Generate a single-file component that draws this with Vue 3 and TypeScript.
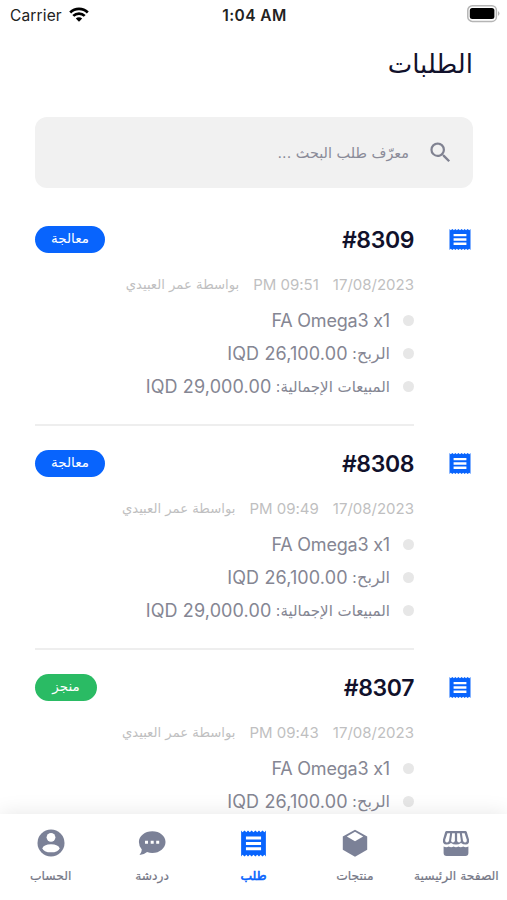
<script setup lang="ts">
interface Order {
  id: string
  status: string
  done: boolean
  time: string
}

const orders: Order[] = [
  { id: '#8309', status: 'معالجة', done: false, time: '09:51' },
  { id: '#8308', status: 'معالجة', done: false, time: '09:49' },
  { id: '#8307', status: 'منجز', done: true, time: '09:43' },
]

const receipt =
  'M17.500 17.200h-11v-2.300h11zm0-4.100h-11v-2.300h11zm0-4.200h-11V6.600h11zM3 22l1-1.200L5.500 22l1.300-1.200L8 22l1.300-1.200 1.300 1.200 1.400-1.200 1.400 1.200 1.300-1.200L16 22l1.200-1.200 1.300 1.200 1.500-1.200 1 1.200V2l-1 1.200L18.500 2l-1.300 1.200L16 2l-1.300 1.200L13.400 2 12 3.200 10.600 2 9.300 3.200 8 2 6.800 3.200 5.500 2 4 3.200 3 2z'

const tabs = [
  { key: 'home', label: 'الصفحة الرئيسية' },
  { key: 'products', label: 'منتجات' },
  { key: 'orders', label: 'طلب' },
  { key: 'chat', label: 'دردشة' },
  { key: 'account', label: 'الحساب' },
]
</script>

<template>
  <div class="screen" dir="rtl">
    <header class="status" dir="ltr">
      <div class="carrier">
        <span>Carrier</span>
        <svg width="20" height="15" viewBox="0 0 20 15">
          <g fill="none" stroke="#000" stroke-width="2.700">
            <path d="M1.200 5.500a12.500 12.500 0 0 1 17.600 0" />
            <path d="M4.300 8.900a8.100 8.100 0 0 1 11.400 0" />
          </g>
          <path d="M10 14.800l-3.200-3.200a4.600 4.600 0 0 1 6.400 0z" />
        </svg>
      </div>
      <span class="clock">1:04 AM</span>
      <svg class="battery" width="33" height="18" viewBox="0 0 33 18">
        <rect x=".8" y=".8" width="28.600" height="15.600" rx="4.500" fill="#fff" stroke="#b5b5b5" stroke-width="1.500" />
        <rect x="2.800" y="3" width="24.600" height="11" rx="2.500" />
        <path d="M31 6q3 2.500 0 5z" fill="#b5b5b5" />
      </svg>
    </header>

    <h1>الطلبات</h1>

    <div class="search">
      <svg width="27" height="27" viewBox="0 0 24 24" fill="#808291">
        <path d="M15.500 14h-.79l-.28-.27A6.470 6.470 0 0 0 16 9.500 6.500 6.500 0 1 0 9.500 16c1.610 0 3.090-.59 4.230-1.570l.27.28v.79l5 4.990L20.490 19l-4.990-5zm-6 0C7.010 14 5 11.990 5 9.500S7.010 5 9.500 5 14 7.010 14 9.500 11.990 14 9.500 14z" />
      </svg>
      <span>معرّف طلب البحث ...</span>
    </div>

    <main>
      <article v-for="o in orders" :key="o.id" class="order">
        <svg class="mark" width="28" height="25" viewBox="0 0 24 24" preserveAspectRatio="none"><path :d="receipt" /></svg>
        <div class="body">
          <div class="top">
            <b dir="ltr">{{ o.id }}</b>
            <span class="badge" :class="{ done: o.done }">{{ o.status }}</span>
          </div>
          <div class="meta">
            <span>17/08/2023</span>
            <span>{{ o.time }} PM</span>
            <span class="by">بواسطة عمر العبيدي</span>
          </div>
          <ul>
            <li><span class="product" dir="ltr">FA Omega3 x1</span></li>
            <li><span class="ar profit">الربح:</span><span class="amount">26,100.00 IQD</span></li>
            <li><span class="ar">المبيعات الإجمالية:</span><span class="amount">29,000.00 IQD</span></li>
          </ul>
        </div>
      </article>
    </main>

    <nav>
      <div v-for="t in tabs" :key="t.key" class="tab" :class="{ active: t.key === 'orders' }">
        <svg v-if="t.key === 'home'" width="28" height="28" viewBox="0 0 28 28">
          <path d="M4.600 2h18.800q1 0 1.400 1L27 10.500q.6 5-3.200 5-2.800 0-4.800-1.600-2.200 1.600-5 1.600t-5-1.600q-2 1.600-4.800 1.600Q.4 15.500 1 10.500L3.200 3q.4-1 1.400-1z" />
          <g fill="#fff">
            <path d="M5.400 4.200h2.700l-1 7q-.5 2.300-2.100 2.300-2.200 0-1.700-2.900z" />
            <path d="M10.200 4.200h2.700v7.300q-.2 2.100-1.900 2.100-2.100 0-1.800-2.400z" />
            <path d="M15.100 4.200h2.700l1 7q.3 2.400-1.800 2.400-1.700 0-1.900-2.100z" />
            <path d="M19.900 4.200h2.700l2.100 6.400q.5 2.900-1.700 2.900-1.600 0-2.100-2.300z" />
          </g>
          <path d="M1.600 17.600q2.800 1.200 5.200 0 2.300 1.200 4.800 0 2.400 1.200 4.800 0 2.400 1.200 4.800 0 2.400 1.200 5.200 0v6.400q0 3-3 3H4.600q-3 0-3-3z" />
        </svg>
        <svg v-else-if="t.key === 'products'" width="28" height="28" viewBox="0 0 28 28">
          <path d="M14 .8l12.200 6.800v13.200L14 27.800 1.800 20.800V7.600z" />
          <path d="M14 2.800l8.200 4.700L14 12.300 5.800 7.500z" fill="#fff" />
        </svg>
        <svg v-else-if="t.key === 'orders'" width="33" height="31" viewBox="0 0 24 24" preserveAspectRatio="none"><path :d="receipt" /></svg>
        <svg v-else-if="t.key === 'chat'" width="28" height="28" viewBox="0 0 28 28">
          <path d="M14.300 2.200C21.800 2.200 27.500 7 27.500 13S21.800 24 14.300 24q-2.700 0-5.200-.9Q6 25.900 1.500 26q2.300-2.400 2.300-5.500Q.9 17.300.9 13C.9 7 6.800 2.200 14.300 2.200z" />
          <path fill="#fff" d="M7 11.700h3v3H7zM12.700 11.700h3v3h-3zM18.200 11.700h3v3h-3z" />
        </svg>
        <svg v-else width="28" height="28" viewBox="0 0 28 28">
          <circle cx="14" cy="14" r="13.500" />
          <circle cx="14" cy="8.300" r="4.400" fill="#fff" />
          <ellipse cx="14" cy="19.300" rx="8.500" ry="4" fill="#fff" />
        </svg>
        <span>{{ t.label }}</span>
      </div>
    </nav>
  </div>
</template>

<style>
body {
  margin: 0;
  background: #fff;
  overflow: hidden;
}
</style>

<style scoped>
.screen {
  width: 507px;
  height: 900px;
  display: flex;
  flex-direction: column;
  overflow: hidden;
  background: #fff;
  font-family: Inter, 'DejaVu Sans', sans-serif;
  font-feature-settings: 'calt' 0;
  color: #11112b;
}
.status {
  height: 30px;
  margin-bottom: 1px;
  flex: none;
  display: grid;
  grid-template-columns: 1fr auto 1fr;
  align-items: center;
  padding: 0 7px 0 10px;
  box-sizing: border-box;
  color: #222;
  font-size: 15.500px;
}
.carrier {
  display: flex;
  align-items: center;
  gap: 7px;
  letter-spacing: .15px;
}
.carrier svg {
  margin-top: -2px;
}
.clock {
  font-weight: 600;
  font-size: 15.500px;
  letter-spacing: .45px;
  margin-left: -1px;
}
.battery {
  justify-self: end;
  margin-top: -2px;
}
h1 {
  margin: 0 34px 0 0;
  height: 86px;
  flex: none;
  font: 400 26px/67px 'DejaVu Sans', sans-serif;
}
.search {
  flex: none;
  height: 71px;
  margin: 0 34px 0 35px;
  padding: 0 19px;
  display: flex;
  align-items: center;
  gap: 18px;
  box-sizing: border-box;
  border-radius: 12px;
  background: #f1f1f1;
  color: #8a8b98;
  font: 14.400px 'DejaVu Sans', sans-serif;
}
main {
  flex: 1;
  min-height: 0;
  overflow: hidden;
  padding: 38px 34px 0 35px;
}
.order {
  height: 224px;
  display: flex;
  gap: 31px;
}
.mark {
  margin: 1px 0 0;
  margin-right: -1px;
  margin-left: 1px;
  fill: #0864fd;
  flex: none;
}
.body {
  flex: 1;
  height: 200px;
  box-sizing: border-box;
  border-bottom: 2px solid #eee;
}
.top {
  height: 27px;
  display: flex;
  justify-content: space-between;
  align-items: center;
}
.top b {
  font-size: 23px;
  font-weight: 600;
  letter-spacing: -.4px;
}
.badge {
  width: 70px;
  height: 27px;
  border-radius: 14px;
  background: #0864fd;
  color: #fff;
  font: 13.500px/25px 'DejaVu Sans', sans-serif;
  text-align: center;
}
.badge.done {
  width: 62px;
  background: #2abb64;
}
.meta {
  margin-top: 19px;
  height: 24px;
  display: flex;
  align-items: center;
  gap: 14px;
  color: #bfbfc1;
  font-size: 15px;
}
.by {
  font: 13.200px 'DejaVu Sans', sans-serif;
}
ul {
  list-style: none;
  margin: 8px 0 0;
  padding: 0;
}
li {
  height: 33px;
  display: flex;
  align-items: center;
  gap: 4px;
  color: #858693;
  font-size: 18px;
  white-space: nowrap;
}
li::before {
  content: '';
  width: 11px;
  height: 11px;
  margin-left: 9px;
  border-radius: 50%;
  background: #e7e7e7;
}
.product {
  letter-spacing: -.2px;
}
.amount {
  letter-spacing: .12px;
}
.ar {
  font: 15px 'DejaVu Sans', sans-serif;
}
.profit {
  font-size: 16px;
}
nav {
  position: relative;
  flex: none;
  height: 86px;
  display: grid;
  grid-template-columns: repeat(5, 1fr);
  background: #fff;
  box-shadow: 0 0 20px rgba(0, 0, 0, .1);
}
.tab {
  display: flex;
  flex-direction: column;
  align-items: center;
  padding-top: 15px;
  box-sizing: border-box;
  fill: #7b8197;
  color: #757786;
  font: 12.300px/20px 'DejaVu Sans', sans-serif;
  white-space: nowrap;
}
.tab span {
  margin-top: auto;
  margin-bottom: 14px;
  -webkit-text-stroke: .2px currentColor;
}
.tab.active {
  padding-top: 14px;
  fill: #0864fd;
  color: #0864fd;
}
.tab.active span {
  -webkit-text-stroke-width: .6px;
}
</style>
